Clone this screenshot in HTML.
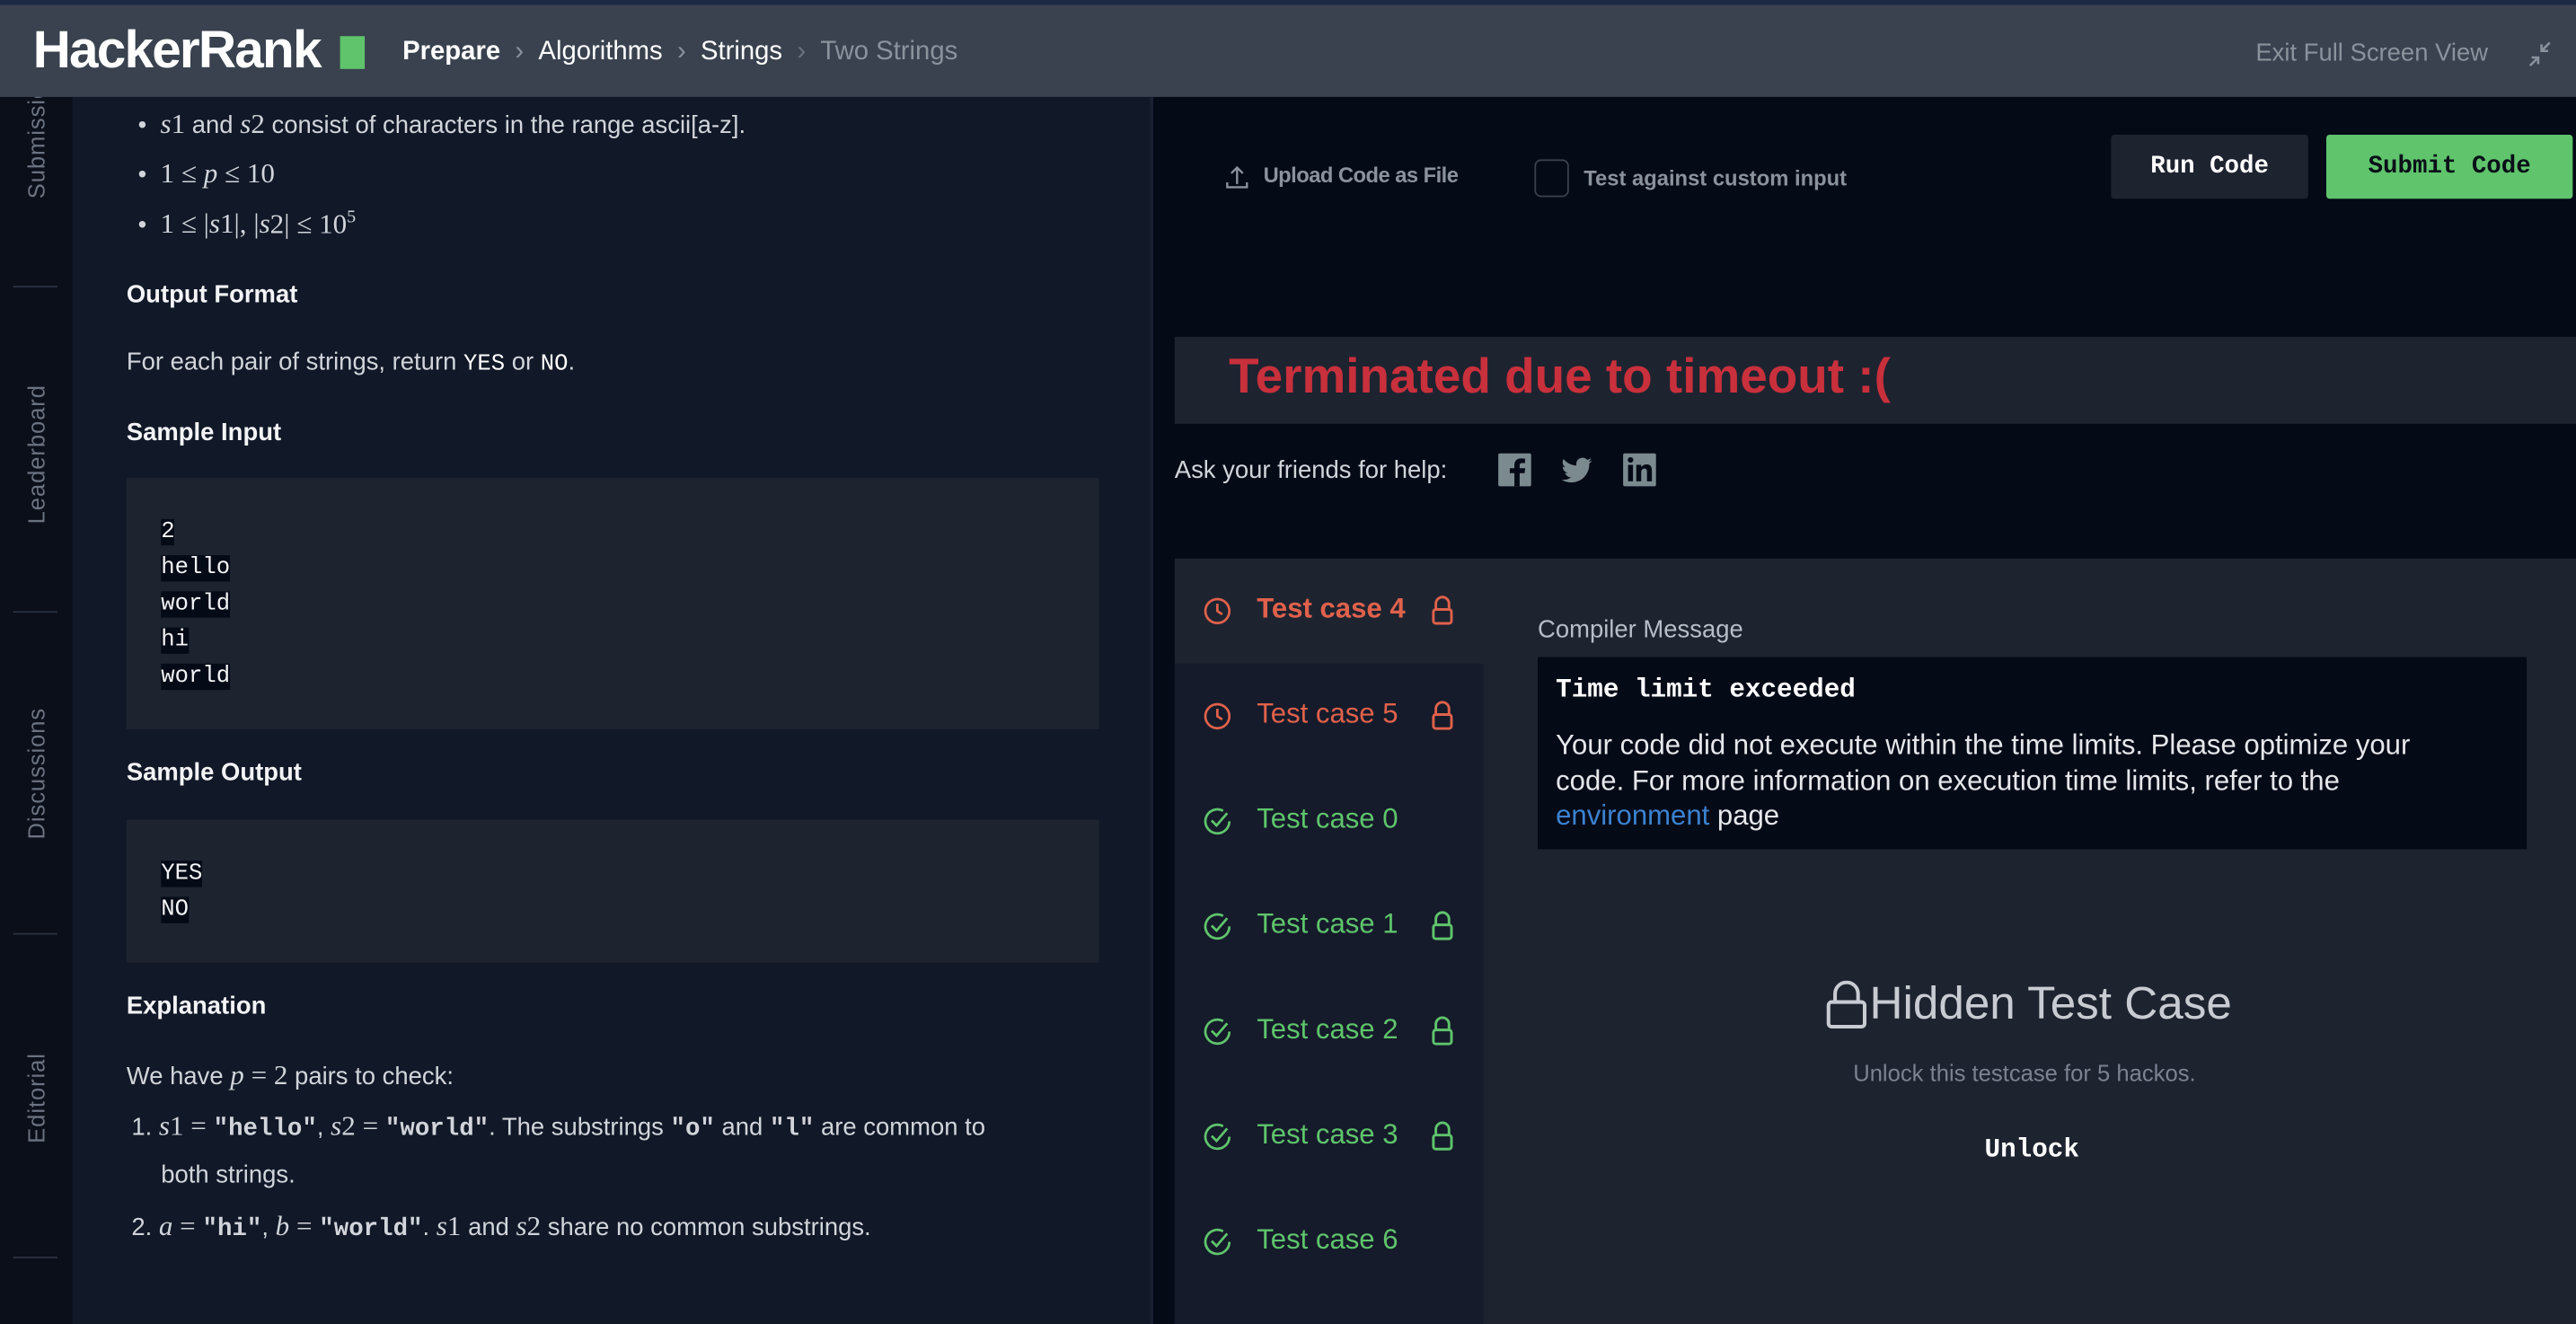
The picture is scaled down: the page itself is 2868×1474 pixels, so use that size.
<!DOCTYPE html>
<html><head><meta charset="utf-8"><style>
*{margin:0;padding:0;box-sizing:border-box}
html,body{width:2868px;height:1474px;overflow:hidden;background:#050a17}
#w{position:absolute;left:0;top:0;width:1568px;height:806px;transform:scale(1.82908,1.82878);transform-origin:0 0;font-family:"Liberation Sans",sans-serif;color:#d8dbe0;overflow:hidden}
.a{position:absolute;white-space:nowrap}
.hdr{left:0;top:0;width:1568px;height:59px;background:#39424e;border-top:3px solid #1c2a44;z-index:5}
.z{z-index:6}
.side{left:0;top:59px;width:44px;height:747px;background:#0b0f1a}
.vt{position:absolute;transform:rotate(-90deg);transform-origin:left top;color:#6b7280;font-size:14px;letter-spacing:.5px}
.sep{position:absolute;left:8px;width:27px;height:1px;background:#2a3140}
.left{left:44px;top:59px;width:656px;height:747px;background:#111827}
.p{font-size:15px;color:#d1d5db}
.h{font-size:15px;font-weight:bold;color:#f3f4f6}
.code{position:absolute;left:77px;width:592px;background:#1e2330}
.code div{font-family:"Liberation Mono",monospace;font-size:14px;color:#f3f4f6;line-height:22px}
.code span{background:#050a17}
.m{font-family:"Liberation Serif",serif;font-style:italic;font-size:17px}
.mn{font-family:"Liberation Serif",serif;font-size:17px}
.tt{font-family:"Liberation Mono",monospace;font-weight:bold;font-size:15px}
.right{left:702px;top:59px;width:866px;height:747px;background:#050a17}
.tc{position:absolute;left:0;width:188px;height:64px;font-size:17px}
</style></head><body><div id="w">
<div class="a hdr"></div>
<div class="a z" style="left:20px;top:12px;font-size:32px;font-weight:bold;color:#fff;letter-spacing:-1px">HackerRank</div>
<div class="a z" style="left:207px;top:22px;width:15px;height:20px;background:#5fc46c"></div>
<div class="a z" style="left:245px;top:23px;font-size:16px;color:#fff;font-weight:bold">Prepare <span style="color:#8a929c;font-weight:normal">&nbsp;›&nbsp;</span> <span style="font-weight:normal">Algorithms</span> <span style="color:#8a929c;font-weight:normal">&nbsp;›&nbsp;</span> <span style="font-weight:normal">Strings</span> <span style="color:#6b7280;font-weight:normal">&nbsp;›&nbsp;</span> <span style="font-weight:normal;color:#8a929c">Two Strings</span></div>
<div class="a z" style="left:1373px;top:24px;font-size:15px;color:#8a929c">Exit Full Screen View</div>
<svg class="a z" style="left:1538px;top:24px" width="16" height="18" viewBox="0 0 16 18" fill="none" stroke="#8a929c" stroke-width="1.4"><path d="M14 2 9 7M9 3v4h4M2 16l5-5M3 11h4v4"/></svg>

<div class="a side">
<div class="vt" style="left:14px;top:62px">Submissions</div>
<div class="sep" style="top:115px"></div>
<div class="vt" style="left:14px;top:260px">Leaderboard</div>
<div class="sep" style="top:313px"></div>
<div class="vt" style="left:14px;top:452px">Discussions</div>
<div class="sep" style="top:509px"></div>
<div class="vt" style="left:14px;top:637px">Editorial</div>
<div class="sep" style="top:706px"></div>
</div>
<div class="a left"></div>

<div class="a p" style="left:84px;top:66px">•&nbsp; <span class="m">s</span><span class="mn">1</span> and <span class="m">s</span><span class="mn">2</span> consist of characters in the range ascii[a-z].</div>
<div class="a p" style="left:84px;top:96px">•&nbsp; <span class="mn">1 ≤ </span><span class="m">p</span><span class="mn"> ≤ 10</span></div>
<div class="a p" style="left:84px;top:126px">•&nbsp; <span class="mn">1 ≤ |</span><span class="m">s</span><span class="mn">1|, |</span><span class="m">s</span><span class="mn">2| ≤ 10<sup style="font-size:11px">5</sup></span></div>
<div class="a h" style="left:77px;top:171px">Output Format</div>
<div class="a p" style="left:77px;top:212px">For each pair of strings, return <span style="font-family:'Liberation Mono',monospace;font-size:14px;color:#fff">YES</span> or <span style="font-family:'Liberation Mono',monospace;font-size:14px;color:#fff">NO</span>.</div>
<div class="a h" style="left:77px;top:255px">Sample Input</div>
<div class="code" style="top:291px;height:153px;padding:22px 0 0 21px"><div><span>2</span></div><div><span>hello</span></div><div><span>world</span></div><div><span>hi</span></div><div><span>world</span></div></div>
<div class="a h" style="left:77px;top:462px">Sample Output</div>
<div class="code" style="top:499px;height:87px;padding:22px 0 0 21px"><div><span>YES</span></div><div><span>NO</span></div></div>
<div class="a h" style="left:77px;top:604px">Explanation</div>
<div class="a p" style="left:77px;top:645px">We have <span class="m">p</span><span class="mn"> = 2</span> pairs to check:</div>
<div class="a p" style="left:80px;top:676px">1. <span class="m">s</span><span class="mn">1 = </span><span class="tt">"hello"</span>, <span class="m">s</span><span class="mn">2 = </span><span class="tt">"world"</span>. The substrings <span class="tt">"o"</span> and <span class="tt">"l"</span> are common to</div>
<div class="a p" style="left:98px;top:707px">both strings.</div>
<div class="a p" style="left:80px;top:737px">2. <span class="m">a</span><span class="mn"> = </span><span class="tt">"hi"</span>, <span class="m">b</span><span class="mn"> = </span><span class="tt">"world"</span>. <span class="m">s</span><span class="mn">1</span> and <span class="m">s</span><span class="mn">2</span> share no common substrings.</div>

<div class="a" style="left:700px;top:59px;width:2px;height:747px;background:#1a2030"></div>
<div class="a" style="left:705px;top:418px;width:6px;height:34px;background:repeating-linear-gradient(#7b8290 0 2px,transparent 2px 4px)"></div>
<div class="a right"></div>

<svg class="a" style="left:746px;top:100px" width="14" height="16" viewBox="0 0 14 16" fill="none" stroke="#8a929c" stroke-width="1.3"><path d="M7 12V2M3.5 5.5 7 2l3.5 3.5M1 11v3h12v-3"/></svg>
<div class="a" style="left:769px;top:99px;font-size:13px;color:#8a929c;font-weight:bold;letter-spacing:-.3px">Upload Code as File</div>
<div class="a" style="left:934px;top:97px;width:21px;height:23px;border:1.5px solid #3a404c;border-radius:4px"></div>
<div class="a" style="left:964px;top:101px;font-size:13px;color:#8a929c;font-weight:bold">Test against custom input</div>
<div class="a" style="left:1285px;top:82px;width:120px;height:39px;background:#1e2330;border-radius:2px;color:#fff;font-family:'Liberation Mono',monospace;font-weight:bold;font-size:15px;text-align:center;line-height:39px">Run Code</div>
<div class="a" style="left:1416px;top:82px;width:150px;height:39px;background:#5fc46c;border-radius:2px;color:#0a0f18;font-family:'Liberation Mono',monospace;font-weight:bold;font-size:15px;text-align:center;line-height:39px">Submit Code</div>

<div class="a" style="left:715px;top:205px;width:853px;height:53px;background:#1e2330"></div>
<div class="a" style="left:748px;top:213px;font-size:30px;font-weight:bold;color:#c8303c">Terminated due to timeout :(</div>
<div class="a" style="left:715px;top:278px;font-size:15px;color:#d1d5db">Ask your friends for help:</div>
<svg class="a" style="left:911px;top:275px" width="100" height="22" viewBox="0 0 100 22"><rect x="1" y="1" width="20" height="20" rx="1" fill="#7b8a8e"/><path d="M14 21v-8h3l.4-3H14V8.4c0-.9.3-1.5 1.6-1.5h1.7V4.2c-.3 0-1.3-.1-2.5-.1-2.5 0-4 1.5-4 4.2V10H8v3h2.8v8z" fill="#050a17"/><path d="M58 5.5c-.7.3-1.4.5-2.2.6.8-.5 1.4-1.2 1.7-2.1-.8.4-1.6.8-2.4.9a3.8 3.8 0 0 0-6.5 3.500c-3.200-.2-6-1.700-7.900-4-1 1.800-.5 4 1.200 5.100-.6 0-1.200-.2-1.700-.5 0 1.900 1.300 3.500 3.100 3.800-.6.2-1.200.2-1.700.1.5 1.500 1.900 2.600 3.600 2.700A7.700 7.700 0 0 1 39.500 17c1.700 1.100 3.700 1.700 5.900 1.700 7.100 0 11-5.900 11-11v-.5c.6-.5 1.200-1.100 1.600-1.700z" fill="#7b8a8e"/><rect x="77" y="1" width="20" height="20" rx="1" fill="#7b8a8e"/><rect x="80" y="8" width="3" height="10" fill="#050a17"/><circle cx="81.5" cy="5" r="1.7" fill="#050a17"/><path d="M85 8h3v1.5c.6-1 1.7-1.8 3.3-1.8 2.5 0 3.2 1.6 3.2 4V18h-3v-5.6c0-1.3-.3-2.2-1.5-2.2s-2 .9-2 2.3V18h-3z" fill="#050a17"/></svg>

<div class="a" style="left:715px;top:340px;width:853px;height:466px;background:#1e2330"></div>
<div class="a" style="left:715px;top:404px;width:188px;height:402px;background:#151b2a"></div>

<div class="a" style="left:715px;top:340px;width:188px">
<div class="tc" style="top:0"><svg class="a" style="left:17px;top:23px" width="18" height="18" viewBox="0 0 18 18" fill="none" stroke="#e0614b" stroke-width="1.5"><circle cx="9" cy="9" r="7.3"/><path d="M9 4.5V9l3 2"/></svg><span class="a" style="left:50px;top:21px;color:#e0614b;font-weight:bold">Test case 4</span><svg class="a" style="left:156px;top:22px" width="14" height="19" viewBox="0 0 14 19" fill="none" stroke="#e0614b" stroke-width="1.6"><path d="M3 9V5.5a4 4 0 0 1 8 0V9"/><rect x="1.5" y="9" width="11" height="8.5" rx="1.5"/></svg></div>
<div class="tc" style="top:64px"><svg class="a" style="left:17px;top:23px" width="18" height="18" viewBox="0 0 18 18" fill="none" stroke="#e0614b" stroke-width="1.5"><circle cx="9" cy="9" r="7.3"/><path d="M9 4.5V9l3 2"/></svg><span class="a" style="left:50px;top:21px;color:#e0614b">Test case 5</span><svg class="a" style="left:156px;top:22px" width="14" height="19" viewBox="0 0 14 19" fill="none" stroke="#e0614b" stroke-width="1.6"><path d="M3 9V5.5a4 4 0 0 1 8 0V9"/><rect x="1.5" y="9" width="11" height="8.5" rx="1.5"/></svg></div>
<div class="tc" style="top:128px"><svg class="a" style="left:17px;top:23px" width="18" height="18" viewBox="0 0 18 18" fill="none" stroke="#5fc46c" stroke-width="1.5"><path d="M16.3 9A7.3 7.3 0 1 1 12.5 2.6"/><path d="M5.5 8.5 8.5 11.5 15 4"/></svg><span class="a" style="left:50px;top:21px;color:#5fc46c">Test case 0</span></div>
<div class="tc" style="top:192px"><svg class="a" style="left:17px;top:23px" width="18" height="18" viewBox="0 0 18 18" fill="none" stroke="#5fc46c" stroke-width="1.5"><path d="M16.3 9A7.3 7.3 0 1 1 12.5 2.6"/><path d="M5.5 8.5 8.5 11.5 15 4"/></svg><span class="a" style="left:50px;top:21px;color:#5fc46c">Test case 1</span><svg class="a" style="left:156px;top:22px" width="14" height="19" viewBox="0 0 14 19" fill="none" stroke="#5fc46c" stroke-width="1.6"><path d="M3 9V5.5a4 4 0 0 1 8 0V9"/><rect x="1.5" y="9" width="11" height="8.5" rx="1.5"/></svg></div>
<div class="tc" style="top:256px"><svg class="a" style="left:17px;top:23px" width="18" height="18" viewBox="0 0 18 18" fill="none" stroke="#5fc46c" stroke-width="1.5"><path d="M16.3 9A7.3 7.3 0 1 1 12.5 2.6"/><path d="M5.5 8.5 8.5 11.5 15 4"/></svg><span class="a" style="left:50px;top:21px;color:#5fc46c">Test case 2</span><svg class="a" style="left:156px;top:22px" width="14" height="19" viewBox="0 0 14 19" fill="none" stroke="#5fc46c" stroke-width="1.6"><path d="M3 9V5.5a4 4 0 0 1 8 0V9"/><rect x="1.5" y="9" width="11" height="8.5" rx="1.5"/></svg></div>
<div class="tc" style="top:320px"><svg class="a" style="left:17px;top:23px" width="18" height="18" viewBox="0 0 18 18" fill="none" stroke="#5fc46c" stroke-width="1.5"><path d="M16.3 9A7.3 7.3 0 1 1 12.5 2.6"/><path d="M5.5 8.5 8.5 11.5 15 4"/></svg><span class="a" style="left:50px;top:21px;color:#5fc46c">Test case 3</span><svg class="a" style="left:156px;top:22px" width="14" height="19" viewBox="0 0 14 19" fill="none" stroke="#5fc46c" stroke-width="1.6"><path d="M3 9V5.5a4 4 0 0 1 8 0V9"/><rect x="1.5" y="9" width="11" height="8.5" rx="1.5"/></svg></div>
<div class="tc" style="top:384px"><svg class="a" style="left:17px;top:23px" width="18" height="18" viewBox="0 0 18 18" fill="none" stroke="#5fc46c" stroke-width="1.5"><path d="M16.3 9A7.3 7.3 0 1 1 12.5 2.6"/><path d="M5.5 8.5 8.5 11.5 15 4"/></svg><span class="a" style="left:50px;top:21px;color:#5fc46c">Test case 6</span></div>
</div>

<div class="a" style="left:936px;top:375px;font-size:15px;color:#b8bec7">Compiler Message</div>
<div class="a" style="left:936px;top:400px;width:602px;height:117px;background:#050a17"></div>
<div class="a" style="left:947px;top:411px;font-family:'Liberation Mono',monospace;font-weight:bold;font-size:16px;color:#fff">Time limit exceeded</div>
<div class="a" style="left:947px;top:443px;width:560px;white-space:normal;font-size:17px;line-height:21.5px;color:#e5e7eb">Your code did not execute within the time limits. Please optimize your code. For more information on execution time limits, refer to the <span style="color:#3b82d0">environment</span> page</div>

<svg class="a" style="left:1111px;top:597px" width="26" height="30" viewBox="0 0 26 30" fill="none" stroke="#c8ccd2" stroke-width="2.2"><path d="M6 13V8a7 7 0 0 1 14 0v5"/><rect x="2" y="13" width="22" height="15" rx="2"/></svg>
<div class="a" style="left:1138px;top:595px;font-size:28px;color:#c8ccd2">Hidden Test Case</div>
<div class="a" style="left:1128px;top:645px;font-size:14px;color:#7b8290">Unlock this testcase for 5 hackos.</div>
<div class="a" style="left:1208px;top:691px;font-family:'Liberation Mono',monospace;font-weight:bold;font-size:16px;color:#fff">Unlock</div>
</div></body></html>
